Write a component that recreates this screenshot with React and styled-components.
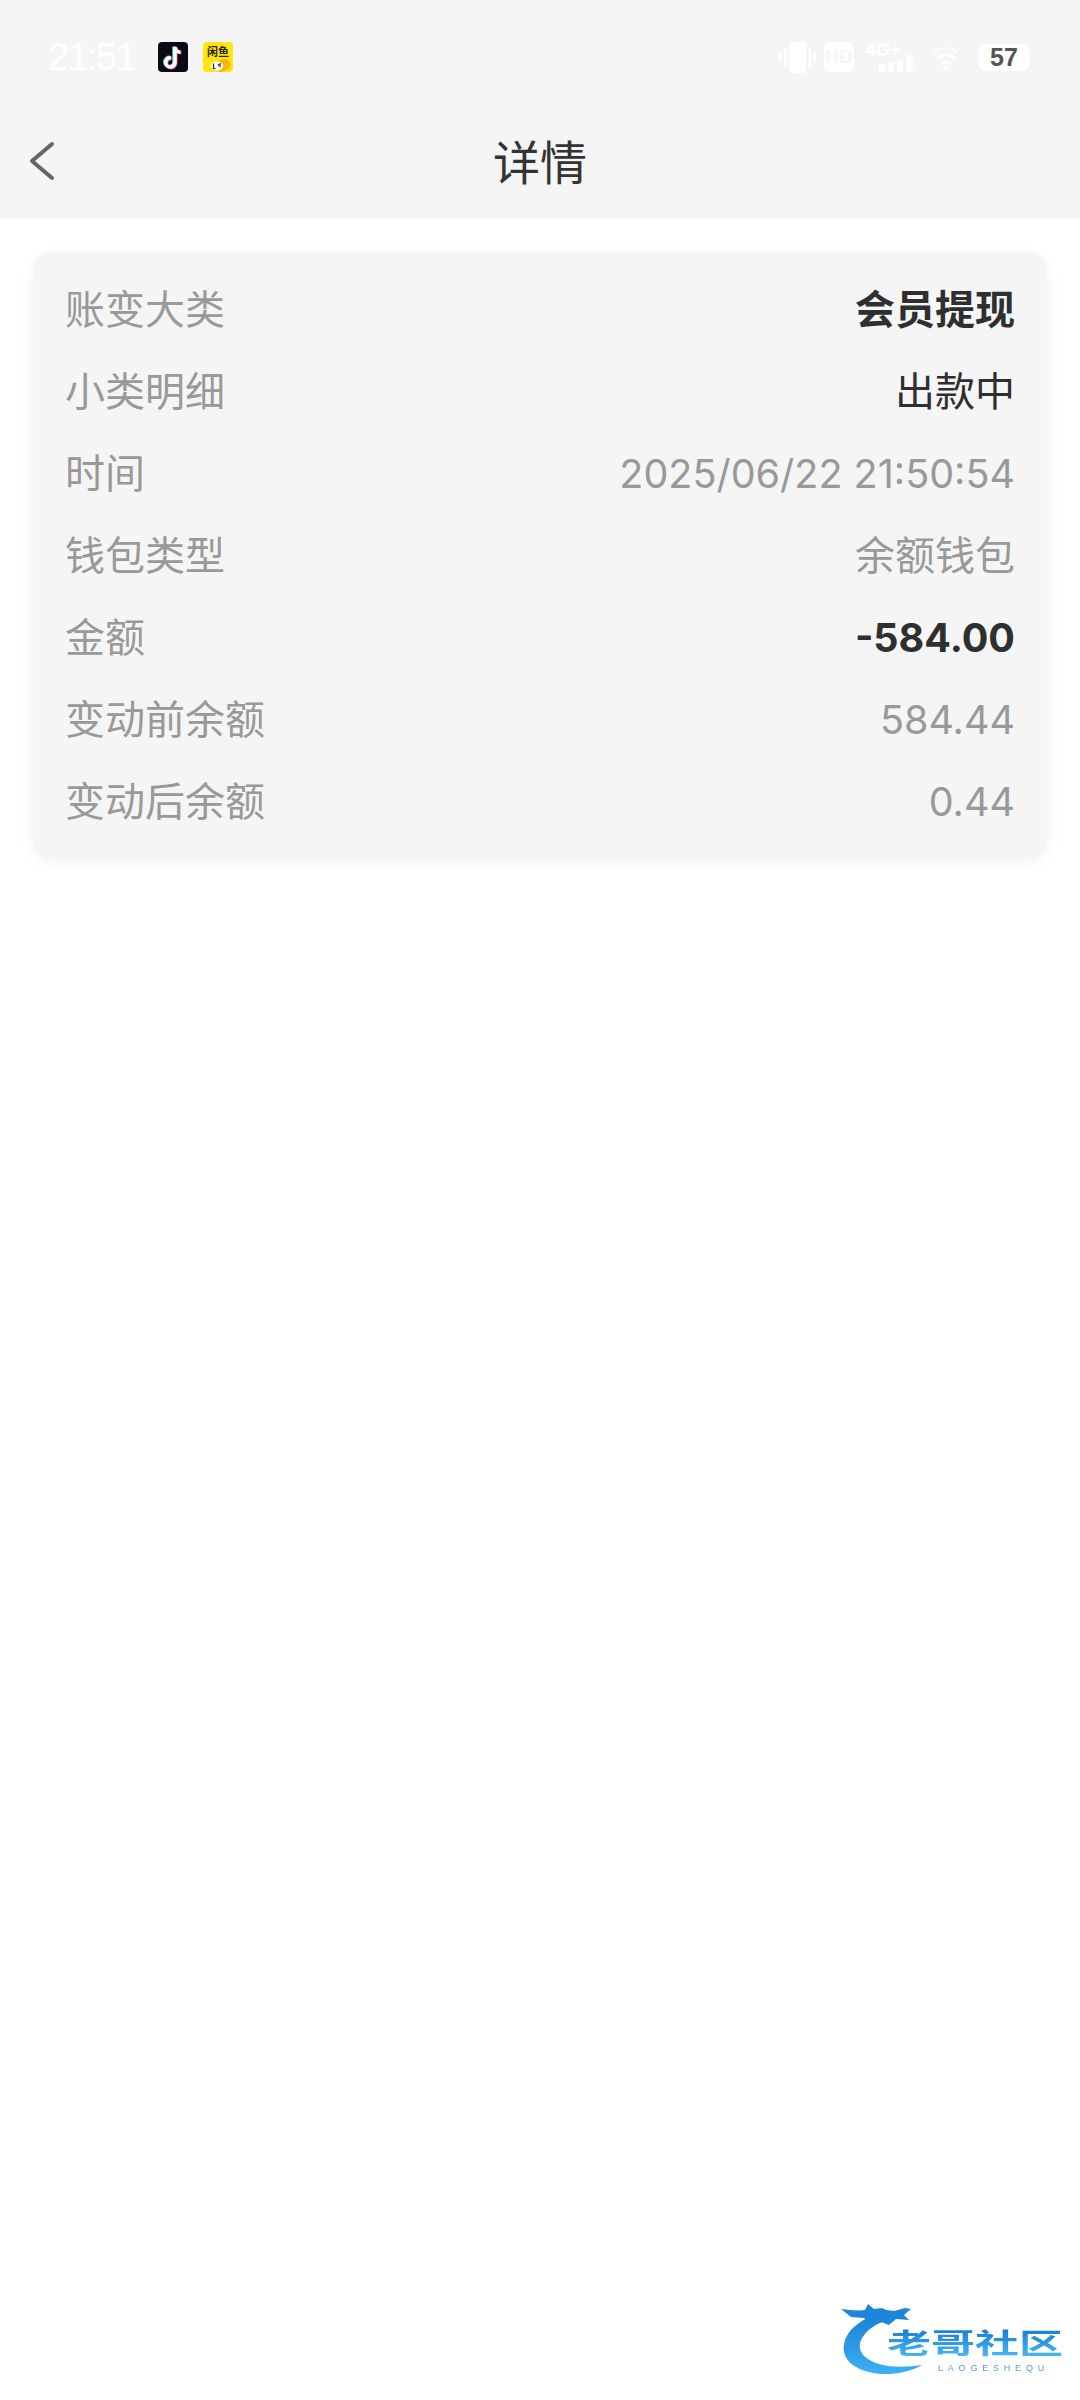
import styled, { createGlobalStyle } from 'styled-components';

const GlobalStyle = createGlobalStyle`
  html, body {
    margin: 0;
    padding: 0;
    background: #fff;
  }
  * {
    box-sizing: border-box;
  }
`;

const rows = [
  { label: '账变大类', value: '会员提现', tone: 'bold' },
  { label: '小类明细', value: '出款中', tone: 'dark' },
  { label: '时间', value: '2025/06/22 21:50:54', numeric: true },
  { label: '钱包类型', value: '余额钱包' },
  { label: '金额', value: '-584.00', tone: 'bold', numeric: true },
  { label: '变动前余额', value: '584.44', numeric: true },
  { label: '变动后余额', value: '0.44', numeric: true },
];

function TikTokIcon() {
  const note = 'M17 5v15.5a4.6 4.6 0 1 1-4-4.55M17 5c.4 3 2.4 5 5.5 5.3';
  return (
    <AppIcon $bg="#0b0a14">
      <svg width="30" height="30" viewBox="0 0 30 30" fill="none" strokeWidth="3.4">
        <path d={note} stroke="#6fe5ea" transform="translate(-1 -0.6)" />
        <path d={note} stroke="#f0527a" transform="translate(.8 .6)" />
        <path d={note} stroke="#fff" />
      </svg>
    </AppIcon>
  );
}

function YellowAppIcon() {
  return (
    <AppIcon $bg="#ffe60f">
      <YellowLabel>闲鱼</YellowLabel>
      <svg width="30" height="30" viewBox="0 0 30 30">
        <path d="M16 30c7 0 11-4 12-7-1-4-4-6-7-6-5 0-9 5-5 13z" fill="#f2b90c" />
        <ellipse cx="14" cy="24" rx="6" ry="4.6" fill="#fff" />
        <path d="M10.5 21.5v5h2M15 23l3-1.4M15 23l3 1.6" stroke="#222" strokeWidth="1.2" fill="none" />
      </svg>
    </AppIcon>
  );
}

function VibrateIcon() {
  return (
    <svg width="37" height="31" viewBox="0 0 37 31" fill="#fff">
      <rect x="10" y="0" width="17" height="31" rx="3" />
      <rect x="5" y="6" width="2.4" height="19" rx="1.2" />
      <rect x="0" y="11" width="2.4" height="9" rx="1.2" />
      <rect x="29.6" y="6" width="2.4" height="19" rx="1.2" />
      <rect x="34.6" y="11" width="2.4" height="9" rx="1.2" />
    </svg>
  );
}

function CellIcon() {
  return (
    <svg width="47" height="31" viewBox="0 0 47 31" fill="#fff">
      <rect x="13" y="22" width="6" height="8.500" rx="2" />
      <rect x="22" y="20" width="6" height="10.500" rx="2" />
      <rect x="31" y="17" width="6" height="13.500" rx="2" />
      <rect x="40" y="13" width="6.500" height="17.500" rx="2" />
    </svg>
  );
}

function WifiIcon() {
  return (
    <svg width="26" height="28" viewBox="0 0 26 28" fill="none" stroke="#fff" strokeWidth="3" strokeLinecap="round">
      <path d="M2 9c6-5 16-5 22 0" opacity=".55" />
      <path d="M5 15c5-4 11-4 16 0" />
      <path d="M9 20.500c2.500-1.800 5.500-1.800 8 0" />
      <circle cx="13" cy="25" r="1" fill="#fff" />
    </svg>
  );
}

function BackIcon() {
  return (
    <svg width="26" height="40" viewBox="0 0 26 40" fill="none" stroke="#666" strokeWidth="4" strokeLinecap="round" strokeLinejoin="round">
      <path d="M23 3 3 20l20 17" />
    </svg>
  );
}

function DragonMark() {
  return (
    <svg width="100" height="78" viewBox="0 0 100 78" fill="none">
      <defs>
        <linearGradient id="dragonFill" x1="0" y1="0" x2="0" y2="1">
          <stop offset="0" stopColor="#1a7fd6" />
          <stop offset="1" stopColor="#3cb0f5" />
        </linearGradient>
      </defs>
      <path d="M35 12C10 22 1 36 3 50c3 15 24 23 46 22 12-1 24-4 32-9-14 2-30 3-43-1C22 57 16 48 20 38c4-8 12-15 24-19z" fill="url(#dragonFill)" />
      <path d="M0 7c9 1 17 2 24 1l3-6 6 5 8-1 4 2 8 1 11-3 6 1-7 6 5 5-13-1-7 6-10-4-8 2-7-5-13-1z" fill="#1d86da" />
    </svg>
  );
}

export default function App() {
  return (
    <>
      <GlobalStyle />
      <Page>
        <TopArea>
          <StatusBar>
            <StatusLeft>
              <Clock>21:51</Clock>
              <TikTokIcon />
              <YellowAppIcon />
            </StatusLeft>
            <StatusRight>
              <VibrateIcon />
              <HdBadge>HD</HdBadge>
              <NetworkGroup>
                <NetworkLabel>4G+</NetworkLabel>
                <CellIcon />
              </NetworkGroup>
              <WifiIcon />
              <Battery>57</Battery>
            </StatusRight>
          </StatusBar>
          <NavBar>
            <BackButton>
              <BackIcon />
            </BackButton>
            <Title>详情</Title>
          </NavBar>
        </TopArea>

        <DetailCard>
          {rows.map((row) => (
            <Row key={row.label}>
              <Label>{row.label}</Label>
              <Value $tone={row.tone} $numeric={row.numeric}>{row.value}</Value>
            </Row>
          ))}
        </DetailCard>

        <Watermark>
          <DragonMark />
          <WatermarkText>
            <WatermarkName>老哥社区</WatermarkName>
            <WatermarkSub>LAOGESHEQU</WatermarkSub>
          </WatermarkText>
        </Watermark>
      </Page>
    </>
  );
}

const Page = styled.div`
  position: relative;
  width: 1080px;
  height: 2400px;
  overflow: hidden;
  background: #fff;
  font-family: "Noto Sans CJK SC", "Liberation Sans", sans-serif;
`;

const TopArea = styled.header`
  height: 219px;
  background: #f5f5f5;
`;

const StatusBar = styled.div`
  display: flex;
  align-items: center;
  justify-content: space-between;
  height: 116px;
  padding: 0 50px 2px 48px;
`;

const StatusLeft = styled.div`
  display: flex;
  align-items: center;
`;

const Clock = styled.span`
  width: 110px;
  color: #fff;
  font-family: "Liberation Sans", sans-serif;
  font-size: 38px;
  line-height: 44px;
  letter-spacing: -1.6px;
`;

const AppIcon = styled.div`
  position: relative;
  display: flex;
  width: 30px;
  height: 30px;
  margin-right: 15px;
  border-radius: 4px;
  overflow: hidden;
  background: ${(p) => p.$bg};
`;

const YellowLabel = styled.span`
  position: absolute;
  top: 3px;
  left: 4px;
  color: #2a2205;
  font-size: 11px;
  line-height: 12px;
  font-weight: 700;
  white-space: nowrap;
`;

const StatusRight = styled.div`
  display: flex;
  align-items: center;
`;

const HdBadge = styled.span`
  display: flex;
  align-items: center;
  justify-content: center;
  width: 30px;
  height: 30px;
  margin: 0 12px 0 8px;
  border-radius: 6px;
  background: #fff;
  color: #f5f5f5;
  font-family: "Liberation Sans", sans-serif;
  font-size: 19px;
  font-weight: 700;
`;

const NetworkGroup = styled.div`
  position: relative;
  width: 47px;
  height: 31px;
  margin-right: 20px;
`;

const NetworkLabel = styled.span`
  position: absolute;
  top: -2px;
  left: 0;
  color: #fff;
  font-family: "Liberation Sans", sans-serif;
  font-size: 18px;
  line-height: 20px;
  font-weight: 700;
`;

const Battery = styled.span`
  display: flex;
  align-items: center;
  justify-content: center;
  width: 52px;
  height: 27px;
  margin-left: 19px;
  border-radius: 8px;
  background: #fff;
  color: #555;
  font-family: "Liberation Sans", sans-serif;
  font-size: 25px;
  font-weight: 700;
`;

const NavBar = styled.nav`
  position: relative;
  display: flex;
  align-items: center;
  justify-content: center;
  height: 92px;
`;

const BackButton = styled.div`
  position: absolute;
  left: 29px;
  top: 25px;
  display: flex;
`;

const Title = styled.h1`
  margin: 0 0 5px;
  color: #333;
  font-size: 47px;
  line-height: 60px;
  font-weight: 400;
`;

const DetailCard = styled.section`
  display: flex;
  flex-direction: column;
  width: 1014px;
  height: 606px;
  margin: 33px 0 0 33px;
  padding: 14px 32px;
  border-radius: 18px;
  background: #f5f5f5;
  box-shadow: 0 4px 16px rgba(0, 0, 0, 0.05);
`;

const Row = styled.div`
  display: flex;
  align-items: center;
  justify-content: space-between;
  height: 82px;
`;

const Label = styled.span`
  color: #999;
  font-size: 40px;
  line-height: 50px;
`;

const Value = styled.span`
  padding-top: ${(p) => (p.$numeric ? '6px' : '0')};
  color: ${(p) => (p.$tone ? '#2f2f2f' : '#999')};
  font-family: ${(p) => (p.$numeric ? 'Inter, sans-serif' : 'inherit')};
  font-size: ${(p) => (p.$numeric ? '39.5px' : '40px')};
  line-height: 50px;
  font-weight: ${(p) => (p.$tone === 'bold' ? 700 : 400)};
`;

const Watermark = styled.div`
  position: absolute;
  left: 841px;
  top: 2302px;
  display: flex;
  filter: blur(0.5px);
`;

const WatermarkText = styled.div`
  position: absolute;
  left: 41px;
  top: 17px;
  display: flex;
  flex-direction: column;
  align-items: center;
  width: 186px;
`;

const WatermarkName = styled.span`
  background: linear-gradient(180deg, #1678d4, #45b8f6);
  -webkit-background-clip: text;
  background-clip: text;
  color: transparent;
  font-size: 44px;
  line-height: 46px;
  font-weight: 700;
  white-space: nowrap;
  transform: scaleY(0.64);
`;

const WatermarkSub = styled.span`
  align-self: flex-end;
  margin: -3px 19px 0 0;
  color: #5a9bd8;
  font-family: "Liberation Sans", sans-serif;
  font-size: 9px;
  line-height: 12px;
  letter-spacing: 4.8px;
`;
